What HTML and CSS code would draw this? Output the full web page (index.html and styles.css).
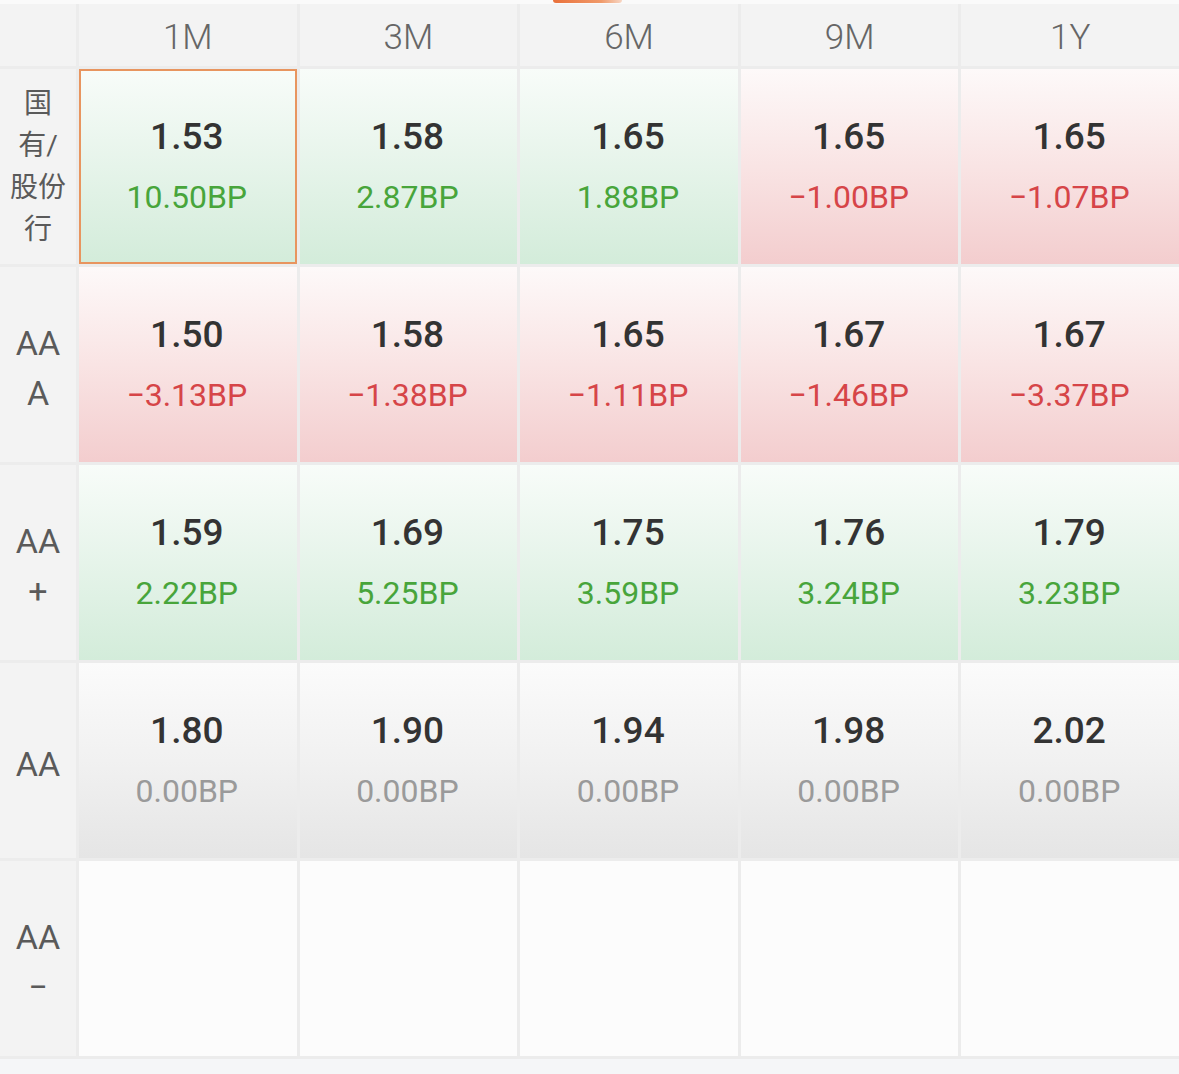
FILE: index.html
```html
<!DOCTYPE html>
<html lang="zh-CN">
<head>
<meta charset="utf-8">
<title>存单收益率</title>
<link rel="stylesheet" href="styles.css">
</head>
<body>
<div class="topbar"><span class="tab-indicator"></span></div>
<div class="grid">
  <div class="corner"></div>
  <div class="head">1M</div>
  <div class="head">3M</div>
  <div class="head">6M</div>
  <div class="head">9M</div>
  <div class="head">1Y</div>

  <div class="label label-cn">国<br>有/<br>股份<br>行</div>
  <div class="cell up selected"><div class="val">1.53</div><div class="bp">10.50BP</div></div>
  <div class="cell up"><div class="val">1.58</div><div class="bp">2.87BP</div></div>
  <div class="cell up"><div class="val">1.65</div><div class="bp">1.88BP</div></div>
  <div class="cell down"><div class="val">1.65</div><div class="bp">−1.00BP</div></div>
  <div class="cell down"><div class="val">1.65</div><div class="bp">−1.07BP</div></div>

  <div class="label">AA<br>A</div>
  <div class="cell down"><div class="val">1.50</div><div class="bp">−3.13BP</div></div>
  <div class="cell down"><div class="val">1.58</div><div class="bp">−1.38BP</div></div>
  <div class="cell down"><div class="val">1.65</div><div class="bp">−1.11BP</div></div>
  <div class="cell down"><div class="val">1.67</div><div class="bp">−1.46BP</div></div>
  <div class="cell down"><div class="val">1.67</div><div class="bp">−3.37BP</div></div>

  <div class="label">AA<br>+</div>
  <div class="cell up"><div class="val">1.59</div><div class="bp">2.22BP</div></div>
  <div class="cell up"><div class="val">1.69</div><div class="bp">5.25BP</div></div>
  <div class="cell up"><div class="val">1.75</div><div class="bp">3.59BP</div></div>
  <div class="cell up"><div class="val">1.76</div><div class="bp">3.24BP</div></div>
  <div class="cell up"><div class="val">1.79</div><div class="bp">3.23BP</div></div>

  <div class="label">AA</div>
  <div class="cell flat"><div class="val">1.80</div><div class="bp">0.00BP</div></div>
  <div class="cell flat"><div class="val">1.90</div><div class="bp">0.00BP</div></div>
  <div class="cell flat"><div class="val">1.94</div><div class="bp">0.00BP</div></div>
  <div class="cell flat"><div class="val">1.98</div><div class="bp">0.00BP</div></div>
  <div class="cell flat"><div class="val">2.02</div><div class="bp">0.00BP</div></div>

  <div class="label">AA<br>−</div>
  <div class="cell empty"></div>
  <div class="cell empty"></div>
  <div class="cell empty"></div>
  <div class="cell empty"></div>
  <div class="cell empty"></div>
</div>
<div class="footer"></div>
</body>
</html>
```

FILE: styles.css
```css
html, body {
  margin: 0;
  padding: 0;
  background: #f5f6f8;
  font-family: Roboto, "Noto Sans CJK SC", sans-serif;
}

.topbar {
  height: 4px;
  background: #fafafa;
  position: relative;
}

.tab-indicator {
  position: absolute;
  left: 553px;
  top: 0;
  width: 69px;
  height: 3px;
  border-radius: 0 0 3px 3px;
  background: linear-gradient(90deg, #e9703a, #f09a6a 70%, #f7d6c4);
}

.grid {
  display: grid;
  grid-template-columns: 76px repeat(5, 1fr);
  grid-template-rows: 62px repeat(5, 195px);
  gap: 3px;
  background: #ececec;
  padding-bottom: 3px;
}

.corner,
.head,
.label {
  background: #f3f3f3;
}

.head {
  display: flex;
  align-items: center;
  justify-content: center;
  font-size: 35px;
  font-weight: 300;
  color: #666;
  padding-top: 4px;
}

.label {
  display: flex;
  align-items: center;
  justify-content: center;
  text-align: center;
  font-size: 34px;
  font-weight: 400;
  line-height: 50px;
  color: #5a5a5a;
  padding-top: 6px;
  box-sizing: border-box;
}

.label-cn {
  font-size: 28px;
  line-height: 42px;
  font-weight: 400;
  padding-top: 0;
}

.cell {
  display: flex;
  flex-direction: column;
  align-items: center;
  justify-content: center;
  gap: 16px;
  box-sizing: border-box;
}

.val {
  font-size: 37px;
  font-weight: 500;
  color: #333;
  line-height: 44px;
  padding-right: 2px;
}

.bp {
  font-size: 32px;
  font-weight: 400;
  line-height: 44px;
  padding-right: 2px;
}

.up {
  background: linear-gradient(180deg, #f8fcf9 0%, #e6f4ea 50%, #d3ecda 100%);
}
.up .bp { color: #48a53b; }

.down {
  background: linear-gradient(180deg, #fdf9f9 0%, #f9e4e4 50%, #f3cdce 100%);
}
.down .bp { color: #d64548; }

.flat {
  background: linear-gradient(180deg, #fbfbfb 0%, #f1f1f1 50%, #e5e5e5 100%);
}
.flat .bp { color: #9a9a9a; }

.empty {
  background: #fcfcfc;
}

.selected {
  box-shadow: inset 0 0 0 2px #e8955f;
}

.footer {
  height: 15px;
  background: #f5f6f8;
}
```
